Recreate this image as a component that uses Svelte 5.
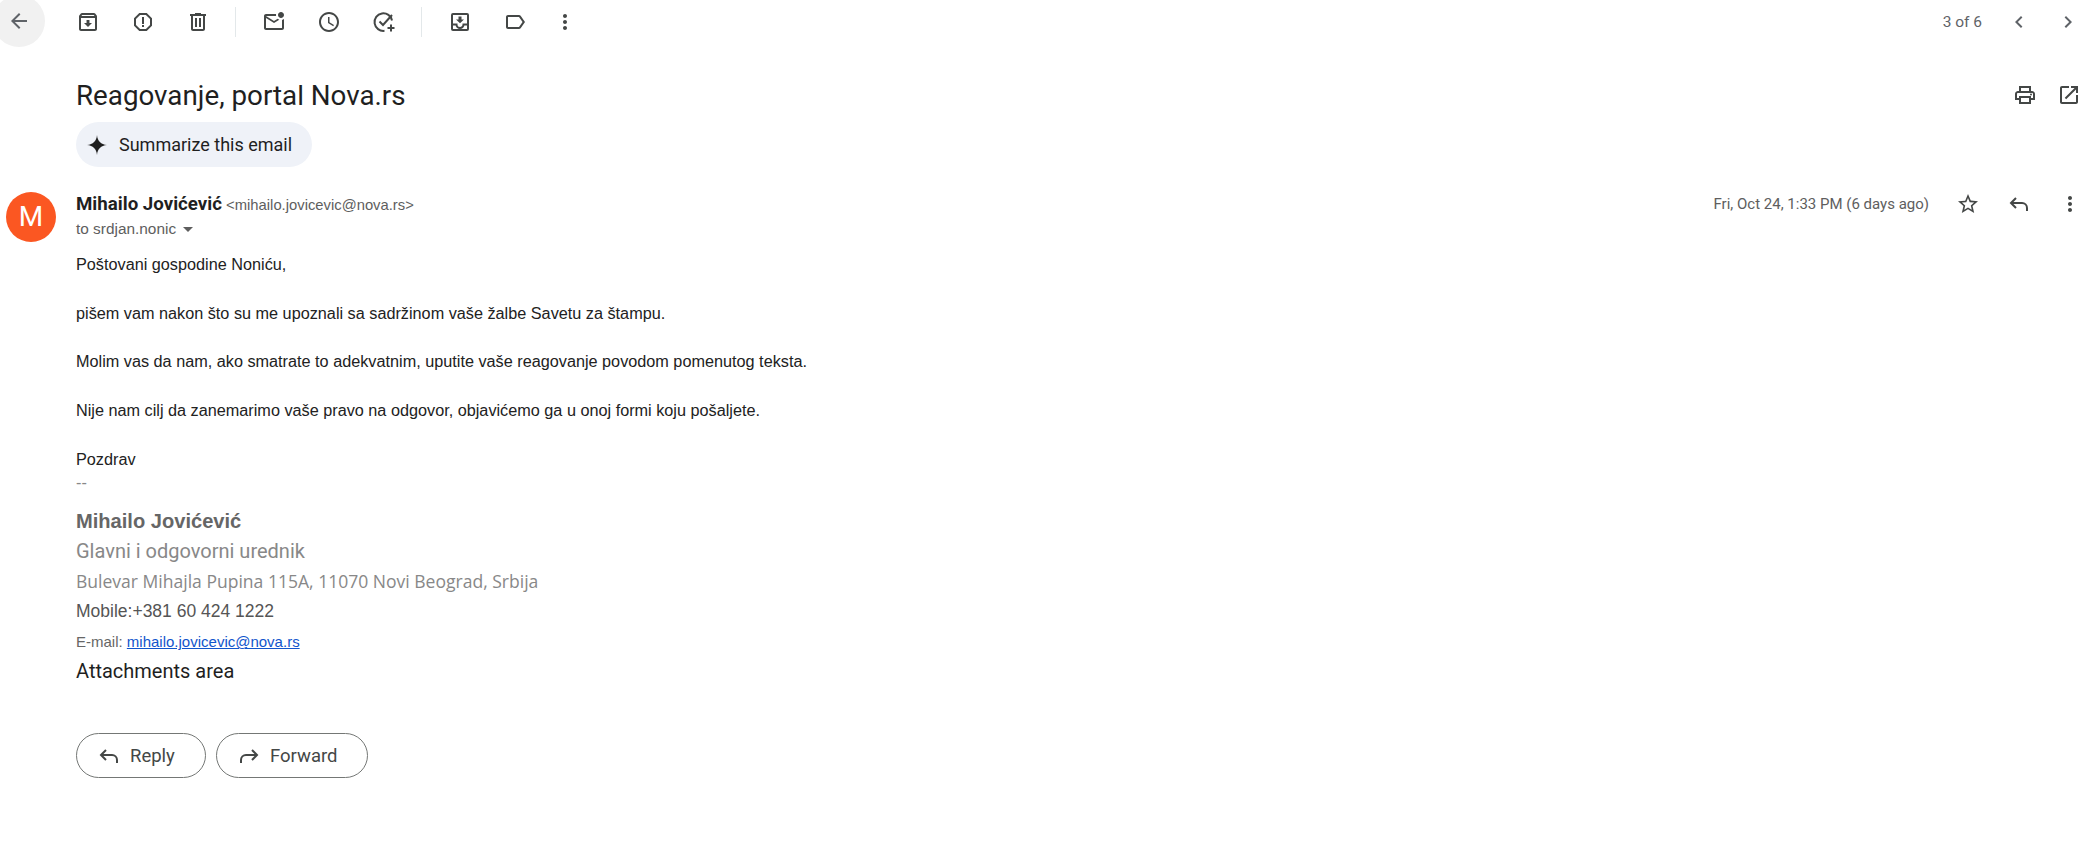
<script>
	const icons = {
		archive: 'M20.54 5.23l-1.39-1.68C18.88 3.21 18.47 3 18 3H6c-.47 0-.88.21-1.16.55L3.46 5.23C3.17 5.57 3 6.02 3 6.5V19c0 1.1.9 2 2 2h14c1.1 0 2-.9 2-2V6.5c0-.48-.17-.93-.46-1.27zM6.24 5h11.52l.83 1H5.42l.82-1zM5 19V8h14v11H5zm8.45-9h-2.9v3H8l4 4 4-4h-2.55z',
		report: 'M15.73 3H8.27L3 8.27v7.46L8.27 21h7.46L21 15.73V8.27L15.73 3zM19 14.9L14.9 19H9.1L5 14.9V9.1L9.1 5h5.8L19 9.1v5.8zM11 7h2v7h-2zM11 15h2v2h-2z',
		trash: 'M15 4V3H9v1H4v2h1v13c0 1.1.9 2 2 2h10c1.1 0 2-.9 2-2V6h1V4h-5zm2 15H7V6h10v13zM9 8h2v9H9zm4 0h2v9h-2z',
		unread: 'M22 8.98V18c0 1.1-.9 2-2 2H4c-1.1 0-2-.9-2-2V6c0-1.1.9-2 2-2h10.1c-.06.32-.1.66-.1 1s.04.68.1 1H4l8 5 3.67-2.29c.47.43 1.02.76 1.63.98L12 13 4 8v10h16V9.9c.74-.15 1.42-.48 2-.92zM16 5c0 1.66 1.34 3 3 3s3-1.34 3-3-1.34-3-3-3-3 1.34-3 3z',
		clock: 'M11.99 2C6.47 2 2 6.48 2 12s4.47 10 9.99 10C17.52 22 22 17.52 22 12S17.52 2 11.99 2zM12 20c-4.42 0-8-3.58-8-8s3.58-8 8-8 8 3.58 8 8-3.58 8-8 8zM12.5 7H11v6l5.25 3.15.75-1.23-4.5-2.67z',
		label: 'M17.63 5.84C17.27 5.33 16.67 5 16 5L5 5.01C3.9 5.01 3 5.9 3 7v10c0 1.1.9 1.99 2 1.99L16 19c.67 0 1.27-.33 1.63-.84L22 12l-4.37-6.16zM16 17H5V7h11l3.55 5L16 17z',
		more: 'M12 8c1.1 0 2-.9 2-2s-.9-2-2-2-2 .9-2 2 .9 2 2 2zm0 2c-1.1 0-2 .9-2 2s.9 2 2 2 2-.9 2-2-.9-2-2-2zm0 6c-1.1 0-2 .9-2 2s.9 2 2 2 2-.9 2-2-.9-2-2-2z',
		back: 'M20 11H7.83l5.59-5.59L12 4l-8 8 8 8 1.41-1.41L7.83 13H20v-2z',
		left: 'M15.41 7.41L14 6l-6 6 6 6 1.41-1.41L10.83 12z',
		right: 'M10 6L8.59 7.41 13.17 12l-4.58 4.59L10 18l6-6z',
		print: 'M19 8h-1V3H6v5H5c-1.66 0-3 1.34-3 3v6h4v4h12v-4h4v-6c0-1.66-1.34-3-3-3zM8 5h8v3H8V5zm8 12v2H8v-4h8v2zm2-2v-2H6v2H4v-4c0-.55.45-1 1-1h14c.55 0 1 .45 1 1v4h-2zM18 10.5a1 1 0 1 0 0 2 1 1 0 0 0 0-2z',
		open: 'M19 19H5V5h7V3H5c-1.11 0-2 .9-2 2v14c0 1.1.89 2 2 2h14c1.1 0 2-.9 2-2v-7h-2v7zM14 3v2h3.59l-9.83 9.83 1.41 1.41L19 6.41V10h2V3h-7z',
		star: 'M22 9.24l-7.19-.62L12 2 9.19 8.63 2 9.24l5.46 4.73L5.82 21 12 17.27 18.18 21l-1.63-7.03L22 9.24zM12 15.4l-3.76 2.27 1-4.28-3.32-2.88 4.38-.38L12 6.1l1.71 4.04 4.38.38-3.32 2.88 1 4.28L12 15.4z',
		sparkle: 'M12 2C12.5 8 16 11.5 22 12 16 12.5 12.5 16 12 22 11.5 16 8 12.5 2 12 8 11.5 11.5 8 12 2z',
	};
	const paragraphs = [
		'Poštovani gospodine Noniću,',
		'pišem vam nakon što su me upoznali sa sadržinom vaše žalbe Savetu za štampu.',
		'Molim vas da nam, ako smatrate to adekvatnim, uputite vaše reagovanje povodom pomenutog teksta.',
		'Nije nam cilj da zanemarimo vaše pravo na odgovor, objavićemo ga u onoj formi koju pošaljete.',
		'Pozdrav',
	];
</script>

{#snippet icon(name, size = 24)}
	<svg viewBox="0 0 24 24" width={size} height={size} fill="currentColor"><path d={icons[name]} /></svg>
{/snippet}

{#snippet replyIcon(size = 24)}
	<svg class="line" viewBox="0 0 24 24" width={size} height={size}><path d="M9 6l-5 5 5 5M4 11h11a5 5 0 0 1 5 5v3" /></svg>
{/snippet}

<main>
	<header class="toolbar">
		<button class="back">{@render icon('back', 24)}</button>
		<div class="tools">
			<button class="tool">{@render icon('archive')}</button>
			<button class="tool">{@render icon('report')}</button>
			<button class="tool">{@render icon('trash')}</button>
			<span class="sep first"></span>
			<button class="tool">{@render icon('unread')}</button>
			<button class="tool">{@render icon('clock')}</button>
			<button class="tool">
				<svg class="line" viewBox="0 0 24 24" width="24" height="24">
					<path d="M20 10.5A8.8 8.8 0 1 0 12.5 20.8" />
					<path d="M7.5 11.5l3.5 3.5 9-10" />
					<path d="M19 14.5v7M15.5 18h7" />
				</svg>
			</button>
			<span class="sep second"></span>
			<button class="tool">
				<svg viewBox="0 0 24 24" width="24" height="24">
					<rect class="tray" x="4" y="4" width="16" height="16" rx="1" />
					<path class="tray" d="M4 14.5h4.5a3.5 3.5 0 0 0 7 0H20" />
					<path fill="currentColor" d="M10.5 6.5h3v3H16l-4 3.8L8 9.5h2.5z" />
				</svg>
			</button>
			<button class="tool">{@render icon('label')}</button>
			<button class="tool narrow">{@render icon('more')}</button>
		</div>
		<div class="pager">
			<span class="count">3 of 6</span>
			<button class="tool">{@render icon('left')}</button>
			<button class="tool">{@render icon('right')}</button>
		</div>
	</header>

	<section class="subject">
		<h1>Reagovanje, portal Nova.rs</h1>
		<div class="subject-actions">
			<button class="tool">{@render icon('print')}</button>
			<button class="tool">{@render icon('open')}</button>
		</div>
	</section>

	<button class="summarize">
		<span class="spark">{@render icon('sparkle', 24)}</span>
		Summarize this email
	</button>

	<article class="message">
		<div class="avatar">M</div>
		<div class="content">
			<div class="meta">
				<div>
					<div class="from"><strong>Mihailo Jovićević</strong> <span>&lt;mihailo.jovicevic@nova.rs&gt;</span></div>
					<div class="to">to srdjan.nonic <i class="caret"></i></div>
				</div>
				<div class="meta-right">
					<span class="date">Fri, Oct 24, 1:33 PM (6 days ago)</span>
					<button class="tool">{@render icon('star')}</button>
					<button class="tool">{@render replyIcon()}</button>
					<button class="tool">{@render icon('more')}</button>
				</div>
			</div>

			<div class="body">
				{#each paragraphs as p}
					<p>{p}</p>
				{/each}
				<div class="dashes">--</div>
			</div>

			<div class="signature">
				<div class="sig-name">Mihailo Jovićević</div>
				<div class="sig-role">Glavni i odgovorni urednik</div>
				<div class="sig-addr">Bulevar Mihajla Pupina 115A, 11070 Novi Beograd, Srbija</div>
				<div class="sig-mobile">Mobile:+381 60 424 1222</div>
				<div class="sig-mail">E-mail: <a href="#top">mihailo.jovicevic@nova.rs</a></div>
			</div>

			<div class="attachments">Attachments area</div>

			<div class="actions">
				<button class="pill">{@render replyIcon(24)} Reply</button>
				<button class="pill forward"><span class="flip">{@render replyIcon(24)}</span> Forward</button>
			</div>
		</div>
	</article>
</main>

<style>
	:global(body) {
		margin: 0;
		background: #fff;
	}

	main {
		width: 2089px;
		height: 866px;
		overflow: hidden;
		font-family: "Liberation Sans", Arial, sans-serif;
		color: #222;
	}

	button {
		border: 0;
		background: none;
		padding: 0;
		font: inherit;
		color: inherit;
	}

	svg {
		display: block;
	}

	.line {
		fill: none;
		stroke: currentColor;
		stroke-width: 2;
	}

	.tray {
		fill: none;
		stroke: currentColor;
		stroke-width: 2;
	}

	.toolbar {
		display: flex;
		align-items: center;
		height: 44px;
		color: #444746;
		position: relative;
	}

	.back {
		position: absolute;
		left: -7px;
		top: -5px;
		width: 52px;
		height: 52px;
		border-radius: 50%;
		background: #f1f1f1;
		display: flex;
		align-items: center;
		justify-content: center;
		color: #5f6368;
	}

	.tools {
		display: flex;
		align-items: center;
		margin-left: 74px;
	}

	.tool {
		width: 28px;
		height: 28px;
		display: flex;
		align-items: center;
		justify-content: center;
	}

	.tools .tool {
		margin-right: 27px;
	}

	.tools .narrow {
		margin-left: -5px;
	}

	.sep {
		width: 1px;
		height: 30px;
		background: #e3e8ea;
	}

	.sep.first {
		margin: 0 24px 0 -4px;
	}

	.sep.second {
		margin: 0 24px 0 -4px;
	}

	.pager {
		margin-left: auto;
		display: flex;
		align-items: center;
		margin-right: 7px;
		color: #5f6368;
	}

	.count {
		font-family: Roboto, sans-serif;
		font-size: 15.5px;
		margin-right: 23px;
	}

	.pager .tool + .tool {
		margin-left: 21px;
	}

	.subject {
		display: flex;
		align-items: center;
		justify-content: space-between;
		height: 64px;
		margin: 19px 6px 0 76px;
	}

	h1 {
		margin: 0;
		font-family: Roboto, sans-serif;
		font-weight: 400;
		font-size: 27.75px;
		color: #1f1f1f;
	}

	.subject-actions {
		display: flex;
		gap: 16px;
		color: #444746;
	}

	.summarize {
		display: flex;
		align-items: center;
		gap: 10px;
		width: 236px;
		height: 45px;
		margin: -5px 0 0 76px;
		padding-left: 9px;
		border-radius: 23px;
		background: #eff2f8;
		font-family: Roboto, sans-serif;
		font-size: 18px;
		color: #1f1f1f;
	}

	.message {
		display: flex;
		margin-top: 25px;
	}

	.avatar {
		flex: none;
		width: 50px;
		height: 50px;
		margin: 0 20px 0 6px;
		border-radius: 50%;
		background: #fb5722;
		color: #fff;
		font-family: Roboto, sans-serif;
		font-size: 28px;
		line-height: 50px;
		text-align: center;
	}

	.content {
		flex: 1;
		min-width: 0;
	}

	.meta {
		display: flex;
		justify-content: space-between;
	}

	.from {
		font-size: 14.8px;
		line-height: 24px;
		color: #5e5e5e;
	}

	.from strong {
		font-family: Roboto, sans-serif;
		font-size: 18.7px;
		font-weight: 700;
		color: #1f1f1f;
	}

	.to {
		font-size: 15.4px;
		line-height: 24px;
		margin-top: 0;
		color: #5e5e5e;
	}

	.caret {
		display: inline-block;
		margin: 0 0 2px 3px;
		border: 5px solid transparent;
		border-top: 5px solid #5e5e5e;
		border-bottom: 0;
	}

	.meta-right {
		display: flex;
		align-items: center;
		height: 24px;
		color: #444746;
		margin-right: 5px;
	}

	.date {
		font-family: Roboto, sans-serif;
		font-size: 15px;
		color: #5e5e5e;
		margin-right: 25px;
	}

	.meta-right .tool + .tool {
		margin-left: 23px;
	}

	.body {
		margin-top: 11px;
		font-size: 16.24px;
		color: #222;
	}

	.body p {
		margin: 0;
		line-height: 24.4px;
		height: 48.7px;
	}

	.dashes {
		margin-top: -25px;
		line-height: 25px;
		color: #888;
	}

	.signature {
		color: #666;
	}

	.sig-name {
		font-size: 20.1px;
		font-weight: 700;
		line-height: 30px;
		margin-top: 11px;
	}

	.sig-role {
		font-family: Roboto, sans-serif;
		font-size: 20px;
		line-height: 30px;
		color: #888;
	}

	.sig-addr {
		font-family: "Open Sans", sans-serif;
		font-size: 17.55px;
		line-height: 30px;
		color: #888;
	}

	.sig-mobile {
		font-size: 17.5px;
		line-height: 30px;
		color: #555;
	}

	.sig-mail {
		font-size: 15px;
		line-height: 31px;
	}

	.sig-mail a {
		color: #1155cc;
	}

	.attachments {
		font-family: Roboto, sans-serif;
		font-size: 20px;
		line-height: 28px;
		color: #1f1f1f;
	}

	.actions {
		display: flex;
		gap: 10px;
		margin-top: 48px;
	}

	.pill {
		display: flex;
		align-items: center;
		gap: 9px;
		height: 45px;
		width: 130px;
		padding-left: 20px;
		box-sizing: border-box;
		border: 1px solid #747775;
		border-radius: 23px;
		font-family: Roboto, sans-serif;
		font-size: 18.5px;
		color: #444746;
	}

	.forward {
		width: 152px;
	}

	.flip {
		transform: scaleX(-1);
	}
</style>
